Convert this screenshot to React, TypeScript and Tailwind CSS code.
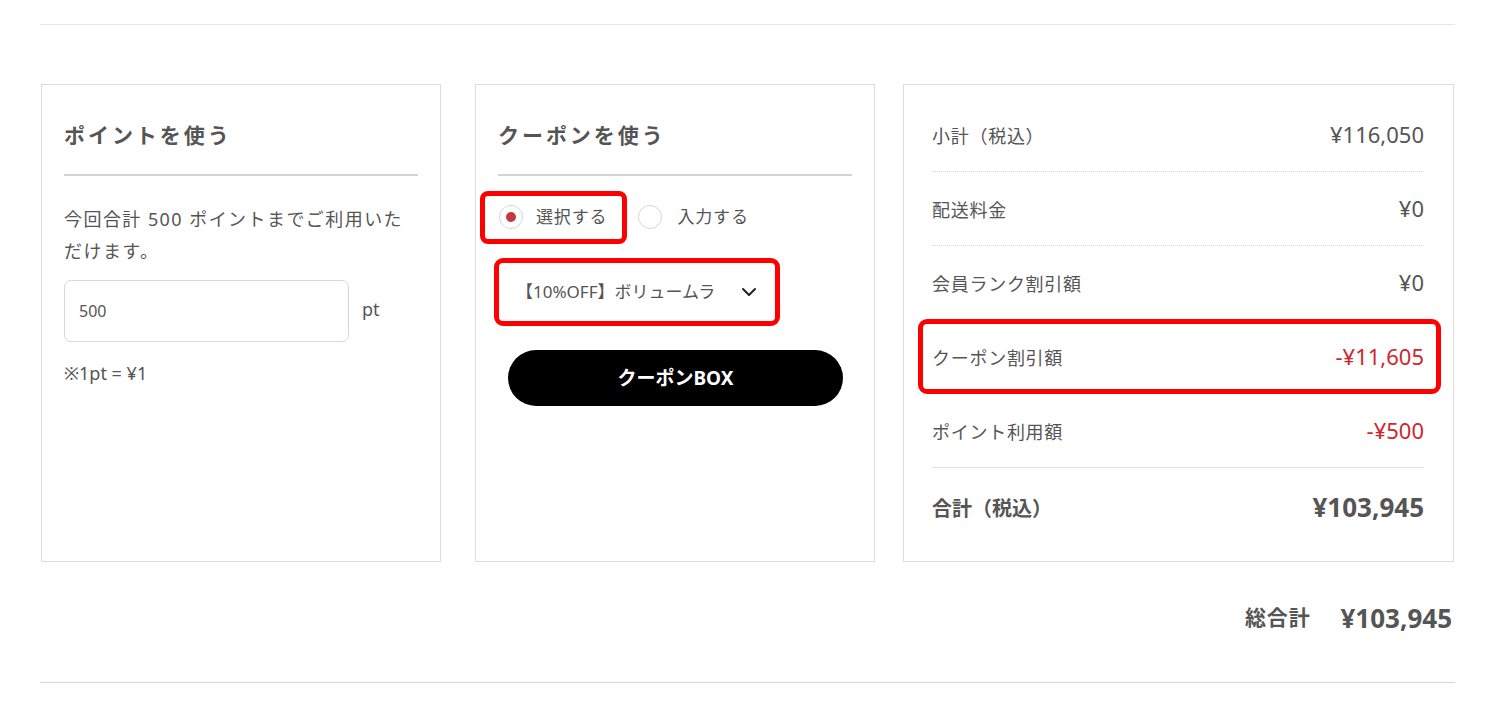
import { ChevronDown } from 'lucide-react';

const font = { fontFamily: '"Noto Sans", "Noto Sans CJK JP", sans-serif' };

const rows = [
  { label: '小計（税込）', value: '¥116,050' },
  { label: '配送料金', value: '¥0' },
  { label: '会員ランク割引額', value: '¥0' },
  { label: 'クーポン割引額', value: '-¥11,605', red: true, mark: true },
  { label: 'ポイント利用額', value: '-¥500', red: true, last: true },
];

const PanelTitle = ({ children }: { children: string }) => (
  <h2 className="text-[21px] leading-[28px] font-bold tracking-[0.14em] text-[#555] pb-[25px] border-b-2 border-[#d4d4d4]">
    {children}
  </h2>
);

export default function App() {
  return (
    <div className="min-h-screen bg-white text-[#555]" style={font}>
      <div className="ml-[40px] w-[1415px] pt-[24px]">
        <div className="border-t border-[#e6e6e6]" />

        <div className="mt-[59px] flex ml-px">
          {/* ポイント */}
          <div className="w-[400px] h-[478px] border border-[#dcdcdc] px-[22px] pt-[36px]">
            <PanelTitle>ポイントを使う</PanelTitle>
            <p className="mt-[27px] text-[18px] leading-[32px] tracking-[0.08em]">
              今回合計 500 ポイントまでご利用いただけます。
            </p>
            <div className="mt-[13px] flex items-center">
              <div className="w-[285px] h-[62px] border border-[#d8d8d8] rounded-[7px] flex items-center pl-[14px] text-[16px]">
                500
              </div>
              <span className="ml-[13px] -mt-[4px] text-[18px]">pt</span>
            </div>
            <p className="mt-[19px] text-[18px] leading-[24px]">※1pt = ¥1</p>
          </div>

          {/* クーポン */}
          <div className="ml-[34px] w-[400px] h-[478px] border border-[#dcdcdc] px-[22px] pt-[36px]">
            <PanelTitle>クーポンを使う</PanelTitle>
            <div className="mt-[29px] flex items-center h-[24px]">
              <label className="relative flex items-center gap-[13px] pl-px">
                <span className="w-[24px] h-[24px] rounded-full border border-[#d6d6d6] flex items-center justify-center">
                  <span className="w-[10px] h-[10px] rounded-full bg-[#c23a3e]" />
                </span>
                <span className="text-[17px] tracking-[0.05em]">選択する</span>
                <span className="absolute -left-[18px] -right-[20px] -top-[13px] -bottom-[14px] border-[5px] border-[#ff0000] rounded-[8px]" />
              </label>
              <label className="ml-[31px] flex items-center gap-[15px]">
                <span className="w-[24px] h-[24px] rounded-full border border-[#d6d6d6]" />
                <span className="text-[17px] tracking-[0.05em]">入力する</span>
              </label>
            </div>

            <div className="relative mt-[34px] w-[276px] h-[58px] flex items-center pl-[17px] pr-[14px] ml-px">
              <span className="w-[206px] overflow-hidden whitespace-nowrap text-[17px]">【10%OFF】ボリュームラ</span>
              <ChevronDown size={24} strokeWidth={2} className="ml-auto text-[#222]" />
              <span className="absolute -left-[5px] -right-[5px] -top-[5px] -bottom-[5px] border-[5px] border-[#ff0000] rounded-[9px]" />
            </div>

            <button className="mt-[29px] mx-[10px] w-[335px] h-[56px] rounded-full bg-black text-white text-[19px] font-bold">
              クーポンBOX
            </button>
          </div>

          {/* 合計 */}
          <div className="ml-[28px] w-[551px] h-[478px] border border-[#dcdcdc] pl-[28px] pr-[29px] pt-[13px]">
            {rows.map((r) => (
              <div
                key={r.label}
                className={`relative h-[74px] flex items-center justify-between border-b ${
                  r.last ? 'border-solid border-[#e2e2e2]' : 'border-dotted border-[#d9d9d9]'
                }`}
              >
                <span className="pt-[4px] text-[18px] tracking-[0.04em]">{r.label}</span>
                <span className={`text-[22px] ${r.red ? 'text-[#d0262d]' : ''}`}>{r.value}</span>
                {r.mark && (
                  <span className="absolute -left-[14px] -right-[17px] -top-px -bottom-px border-[5px] border-[#ff0000] rounded-[9px]" />
                )}
              </div>
            ))}
            <div className="h-[78px] flex items-center justify-between">
              <span className="pt-[4px] text-[20px] font-bold">合計（税込）</span>
              <span className="text-[26px] font-bold">¥103,945</span>
            </div>
          </div>
        </div>

        <div className="mt-[38px] flex justify-end items-center gap-[30px] pr-[3px] h-[36px] font-bold">
          <span className="text-[21px] tracking-[0.04em]">総合計</span>
          <span className="text-[26px]">¥103,945</span>
        </div>

        <div className="mt-[46px] border-t border-[#d6d6d6]" />
      </div>
    </div>
  );
}
